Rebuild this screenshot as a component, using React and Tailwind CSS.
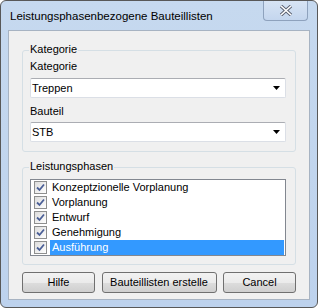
import React from 'react';

const phasen = ['Konzeptzionelle Vorplanung', 'Vorplanung', 'Entwurf', 'Genehmigung', 'Ausführung'];

function Check() {
  return (
    <span className="w-[13px] h-[13px] shrink-0 border border-[#8e8f8f] bg-gradient-to-br from-[#dcdcdc] to-[#ffffff] flex items-center justify-center">
      <svg width="9" height="9" viewBox="0 0 9 9">
        <path d="M1 4.5 L3.5 7 L8 1.5" fill="none" stroke="#4a5f97" strokeWidth="1.8" />
      </svg>
    </span>
  );
}

function Combo({ value }) {
  return (
    <div className="h-[20px] bg-white border border-[#dbdfe6] border-t-[#abadb3] rounded-[2px] flex items-center justify-between pl-[1px] pr-[4px]">
      <span>{value}</span>
      <svg width="8" height="5" viewBox="0 0 8 5"><path d="M0 0 H7 L3.5 4 Z" fill="#000" /></svg>
    </div>
  );
}

function Group({ title, children, className }) {
  return (
    <div className={'relative border border-[#d5dfe5] rounded-[3px] ' + className}>
      <span className="absolute -top-[9px] left-[6px] bg-[#f0f0f0] px-[1px] leading-[15px]">{title}</span>
      {children}
    </div>
  );
}

function Btn({ children, className }) {
  return (
    <button className={'h-[21px] border border-[#707070] rounded-[3px] bg-[linear-gradient(#f2f2f2_0%,#ebebeb_50%,#dddddd_50%,#cfcfcf_100%)] text-black ' + className}>
      {children}
    </button>
  );
}

export default function App() {
  return (
    <div className="w-[318px] h-[308px] bg-white" style={{ fontFamily: '"Liberation Sans", Arial, sans-serif' }}>
      <div className="w-[318px] h-[308px] border border-[#585858] rounded-[6px] bg-gradient-to-b from-[#c6d9ef] to-[#bdd2ed] flex flex-col text-[11px] text-black">
        <div className="h-[29px] flex items-start justify-between">
          <span className="pl-[9px] pt-[8px] leading-[15px] text-[11.5px]">Leistungsphasenbezogene Bauteillisten</span>
          <div className="mr-[9px] w-[45px] h-[20px] border border-t-0 border-[#8ea2bd] rounded-b-[4px] bg-gradient-to-b from-[#d7e4f4] to-[#c4d6ee] flex items-center justify-center">
            <svg width="14" height="11" viewBox="0 0 14 11">
              <path d="M2 1 L12 10 M12 1 L2 10" stroke="#5a6070" strokeWidth="3.4" />
              <path d="M2 1 L12 10 M12 1 L2 10" stroke="#ffffff" strokeWidth="1.6" />
            </svg>
          </div>
        </div>
        <div className="mx-[7px] mb-[7px] flex-1 border border-[#a7b3c2] bg-[#f0f0f0] flex flex-col px-[13px] pt-[19px]">
          <Group title="Kategorie" className="pl-[7px] pr-[9px] pt-[8px] pb-[9px]">
            <div className="leading-[15px] h-[19px]">Kategorie</div>
            <Combo value="Treppen" />
            <div className="leading-[15px] h-[23px] pt-[5px] mt-[1px]">Bauteil</div>
            <Combo value="STB" />
          </Group>
          <Group title="Leistungsphasen" className="mt-[15px] pl-[7px] pr-[9px] pt-[11px] pb-[8px]">
            <div className="border border-[#828790] bg-white pr-[1px]">
              {phasen.map((p, i) => (
                <div key={p} className="h-[15px] flex items-center pl-[3px]">
                  <Check />
                  <span className={'ml-[3px] flex-1 h-[15px] pl-[2px] leading-[15px] ' + (i === 4 ? 'bg-[#3399ff] text-white' : '')}>{p}</span>
                </div>
              ))}
            </div>
          </Group>
          <div className="mt-[7px] flex justify-between">
            <Btn className="w-[73px]">Hilfe</Btn>
            <Btn className="w-[115px]">Bauteillisten erstelle</Btn>
            <Btn className="w-[73px]">Cancel</Btn>
          </div>
        </div>
      </div>
    </div>
  );
}
